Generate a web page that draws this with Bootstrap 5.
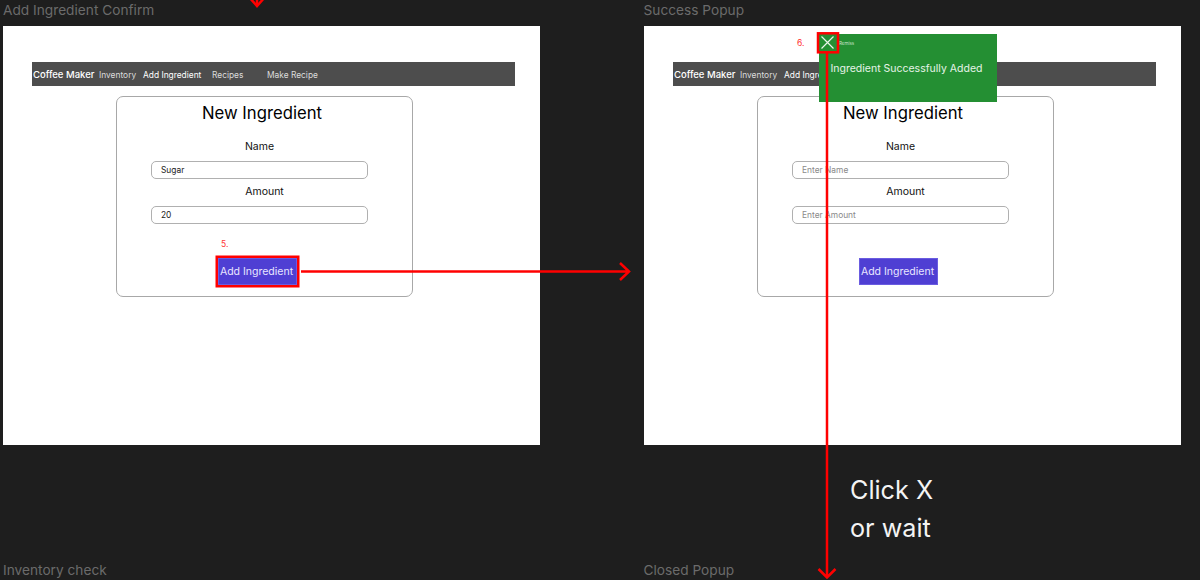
<!DOCTYPE html>
<html lang="en">
<head>
  <meta charset="UTF-8" />
  <title>Add Ingredient flow</title>
  <link href="https://cdn.jsdelivr.net/npm/bootstrap@5.3.0/dist/css/bootstrap.min.css" rel="stylesheet" />
  <style>
    body { margin: 0; background: #1e1e1e; font-family: Inter, "Liberation Sans", sans-serif; overflow: hidden; }
    .board { position: relative; width: 1200px; height: 580px; overflow: hidden; }
    .frame-title { position: absolute; font-size: 13.700px; line-height: 20px; color: #6b6b6b; white-space: nowrap; }
    .t1 { left: 3px; top: 0; }
    .t2 { left: 643.500px; top: 0; }
    .t3 { left: 3px; top: 560px; }
    .t4 { left: 643.500px; top: 560px; }
    .frame { position: absolute; top: 26px; width: 537px; height: 419px; background: #fff; padding: 36px 25px 0 29px; }
    .f1 { left: 3px; }
    .f2 { left: 644px; }
    .app-bar { height: 24px; background: #4d4d4d; padding: 2px 0 0 1px; flex-wrap: nowrap; justify-content: flex-start; align-items: center; }
    .app-brand { font-size: 9.500px; font-weight: 500; color: #fff; width: 66px; white-space: nowrap; }
    .app-link { font-size: 8.400px; color: #dcdcdc; white-space: nowrap; }
    .l1 { width: 44px; }
    .l2 { width: 69px; color: #fff; }
    .l3 { width: 55px; }
    .form-box { width: 297px; height: 201px; margin: 10px 0 0 84px; border: 1px solid #a8a8a8; border-radius: 7px; padding: 6px 0 0 34px; }
    .box-title { font-size: 16.700px; line-height: 20px; font-weight: 400; color: #000; margin: 0 0 17px; text-align: center; width: 222px; }
    .field-label { font-size: 10.500px; line-height: 14px; color: #111; display: block; margin: 0; text-align: center; width: 217px; }
    .lb-name { margin-bottom: 7px; }
    .lb-amount { padding-left: 10px; margin-bottom: 7px; margin-top: 6px; }
    .field-input.form-control { width: 217px; height: 18px; min-height: 0; font-size: 8.400px; line-height: 12px; padding: 2px 9px; border: 1px solid #b0b0b0; border-radius: 5px; color: #222; }
    .field-input.form-control::placeholder { color: #8a8a8a; opacity: 1; }
    .add-btn.btn { display: block; width: 79px; height: 27px; margin: 34px 0 0 67px; padding: 0 2px 0 0; border-radius: 0; font-size: 10.500px; line-height: 26px; color: #e9e6ff; background: #4f3fd3; border: 1px solid #6a5ce0; white-space: nowrap; }
    .add-btn.marked { box-shadow: 0 0 0 2.500px #f00; }
    .step-no { position: absolute; font-size: 8.500px; line-height: 12px; color: #f33; }
    .s5 { left: 221px; top: 238px; }
    .s6 { left: 797px; top: 37px; }
    .popup { position: absolute; left: 819px; top: 34px; width: 178px; height: 68px; background: #248f33; }
    .popup-head { font-size: 4.500px; line-height: 6px; padding: 7px 0 0 20px; color: #c9e3cd; }
    .popup-msg { font-size: 10.500px; line-height: 14px; padding: 15px 0 0 11.500px; color: #e6f3e8; white-space: nowrap; }
    .arrows { position: absolute; left: 0; top: 0; }
    .note { position: absolute; left: 850px; top: 471px; font-size: 25.200px; line-height: 38px; color: #f4f4f4; }
  </style>
</head>
<body>
  <div class="board">
    <div class="frame-title t1">Add Ingredient Confirm</div>
    <div class="frame-title t2">Success Popup</div>
    <div class="frame-title t3">Inventory check</div>
    <div class="frame-title t4">Closed Popup</div>

    <div class="frame f1">
      <nav class="navbar app-bar">
        <span class="app-brand">Coffee Maker</span>
        <a class="app-link l1 text-decoration-none" href="#">Inventory</a>
        <a class="app-link l2 text-decoration-none" href="#">Add Ingredient</a>
        <a class="app-link l3 text-decoration-none" href="#">Recipes</a>
        <a class="app-link text-decoration-none" href="#">Make Recipe</a>
      </nav>
      <form class="form-box">
        <h2 class="box-title">New Ingredient</h2>
        <label class="field-label lb-name">Name</label>
        <input class="form-control field-input" value="Sugar" />
        <label class="field-label lb-amount">Amount</label>
        <input class="form-control field-input" value="20" />
        <button class="btn add-btn marked" type="button">Add Ingredient</button>
      </form>
    </div>

    <div class="frame f2">
      <nav class="navbar app-bar">
        <span class="app-brand">Coffee Maker</span>
        <a class="app-link l1 text-decoration-none" href="#">Inventory</a>
        <a class="app-link l2 text-decoration-none" href="#">Add Ingredient</a>
        <a class="app-link l3 text-decoration-none" href="#">Recipes</a>
        <a class="app-link text-decoration-none" href="#">Make Recipe</a>
      </nav>
      <form class="form-box">
        <h2 class="box-title">New Ingredient</h2>
        <label class="field-label lb-name">Name</label>
        <input class="form-control field-input" placeholder="Enter Name" />
        <label class="field-label lb-amount">Amount</label>
        <input class="form-control field-input" placeholder="Enter Amount" />
        <button class="btn add-btn" type="button">Add Ingredient</button>
      </form>
    </div>

    <div class="popup">
      <div class="popup-head">Remiss</div>
      <div class="popup-msg">Ingredient Successfully Added</div>
    </div>

    <span class="step-no s5">5.</span>
    <span class="step-no s6">6.</span>

    <svg class="arrows" width="1200" height="580" viewBox="0 0 1200 580" fill="none">
      <path d="M249 -3 L257 6 L265 -3" stroke="#f00" stroke-width="2.500" />
      <path d="M257 -6 V5" stroke="#f00" stroke-width="2.500" />
      <path d="M301 271.500 H629 M620 263 L629 271.500 L620 280" stroke="#f00" stroke-width="2.500" />
      <rect x="818" y="33.300" width="20" height="19" fill="#248f33" stroke="#f00" stroke-width="2.500" />
      <path d="M821.500 36.500 L833.500 48.500 M833.500 36.500 L821.500 48.500" stroke="#eaf5ec" stroke-width="1.200" />
      <path d="M827 53 V577 M818.500 569 L827 577.500 L835.500 569" stroke="#f00" stroke-width="2.500" />
    </svg>

    <div class="note">Click X<br />or wait</div>
  </div>
  <script src="https://cdn.jsdelivr.net/npm/bootstrap@5.3.0/dist/js/bootstrap.bundle.min.js"></script>
</body>
</html>
